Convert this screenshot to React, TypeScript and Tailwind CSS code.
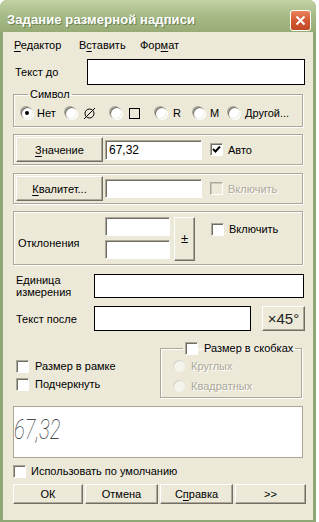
import { ReactNode } from "react";

const sunken =
  "bg-white border border-t-[#aca899] border-l-[#aca899] border-r-white border-b-white shadow-[inset_1px_1px_0_#716f64]";
const flat = "bg-white border border-black";
const etched =
  "border border-[#aca899] shadow-[inset_1px_1px_0_#fff,1px_1px_0_#fff]";

function U({ children }: { children: ReactNode }) {
  return <span className="underline underline-offset-[2px]">{children}</span>;
}

function Btn({ className = "", children }: { className?: string; children: ReactNode }) {
  return (
    <div
      className={`flex items-center justify-center bg-[#ece9d8] border border-t-white border-l-white border-r-[#716f64] border-b-[#716f64] shadow-[inset_-1px_-1px_0_#aca899] ${className}`}
    >
      {children}
    </div>
  );
}

function Check({ checked = false, disabled = false }: { checked?: boolean; disabled?: boolean }) {
  return (
    <span
      className={`flex items-center justify-center w-[13px] h-[13px] shrink-0 border border-t-[#aca899] border-l-[#aca899] border-r-white border-b-white ${
        disabled ? "bg-[#ece9d8] shadow-[inset_1px_1px_0_#c9c7ba]" : "bg-white shadow-[inset_1px_1px_0_#716f64]"
      }`}
    >
      {checked && (
        <svg width="9" height="9" viewBox="0 0 9 9">
          <path d="M1 4 L3.5 6.5 L8 1.5" stroke="#000" strokeWidth="2" fill="none" />
        </svg>
      )}
    </span>
  );
}

function Radio({ checked = false, disabled = false }: { checked?: boolean; disabled?: boolean }) {
  return (
    <span
      className={`flex items-center justify-center w-[12px] h-[12px] shrink-0 rounded-full ${
        disabled
          ? "bg-[#f4f3ec] shadow-[inset_1px_1px_0_#d6d4c8]"
          : "bg-white shadow-[inset_1px_1px_0_#716f64,inset_-1px_-1px_0_#f0efe8,-1px_-1px_0_#aca899,1px_1px_0_#fff]"
      }`}
    >
      {checked && <span className="w-[4px] h-[4px] rounded-full bg-black" />}
    </span>
  );
}

function Disabled({ children }: { children: ReactNode }) {
  return <span className="text-[#aca899] [text-shadow:1px_1px_0_#fff]">{children}</span>;
}

export default function App() {
  return (
    <div className="w-[319px] h-[522px] bg-white font-['Liberation_Sans',Arial,sans-serif] text-[11px] leading-[14px] text-black">
      <div className="w-[316px] flex flex-col bg-[#8fa774] rounded-t-[7px] px-[3px] pb-[3px]">
        {/* title bar */}
        <div className="h-[32px] -mx-[3px] rounded-t-[7px] flex items-center pt-[8px] pl-[7px] pr-[5px] bg-gradient-to-b from-[#c3d2a4] via-[#a6ba86] to-[#97ac75]">
          <span className="flex-1 font-bold text-[13px] text-white [text-shadow:1px_1px_0_#6d8152] tracking-[0.1px]">
            Задание размерной надписи
          </span>
          <div className="w-[21px] h-[21px] rounded-[3px] border border-white bg-gradient-to-b from-[#e8825c] via-[#d35a33] to-[#c04a24] flex items-center justify-center">
            <svg width="11" height="11" viewBox="0 0 11 11">
              <path d="M1.5 1.5 L9.5 9.5 M9.5 1.5 L1.5 9.5" stroke="#fff" strokeWidth="2" />
            </svg>
          </div>
        </div>

        <div className="bg-[#ece9d8] flex flex-col pl-[10px] pr-[6px] pb-[16px]">
          {/* menu */}
          <div className="h-[23px] -ml-[10px] flex items-center pt-[2px] pl-[11px]">
            <span className="w-[65px]">
              <U>Р</U>едактор
            </span>
            <span className="w-[61px]">
              В<U>с</U>тавить
            </span>
            <span>
              Фор<U>м</U>ат
            </span>
          </div>

          {/* Текст до */}
          <div className="mt-[4px] h-[26px] flex items-center">
            <span className="ml-[2px] w-[72px]">Текст до</span>
            <div className={`${flat} w-[218px] h-[26px]`} />
          </div>

          {/* Символ */}
          <fieldset className={`mt-[2px] w-[290px] ${etched} pl-[7px] pt-[5px] pb-[6px]`}>
            <legend className="ml-[7px] px-[2px] leading-[14px]">Символ</legend>
            <div className="flex items-center h-[14px]">
              <div className="flex items-center w-[44px] gap-[4px]">
                <Radio checked />
                <span>Нет</span>
              </div>
              <div className="flex items-center w-[45px] gap-[6px]">
                <Radio />
                <svg width="13" height="13" viewBox="0 0 13 13">
                  <circle cx="6.5" cy="6.5" r="4.5" stroke="#000" fill="none" />
                  <path d="M1 12 L12 1" stroke="#000" />
                </svg>
              </div>
              <div className="flex items-center w-[45px] gap-[7px]">
                <Radio />
                <span className="w-[11px] h-[11px] border border-black" />
              </div>
              <div className="flex items-center w-[38px] gap-[6px]">
                <Radio />
                <span>R</span>
              </div>
              <div className="flex items-center w-[35px] gap-[5px]">
                <Radio />
                <span>M</span>
              </div>
              <div className="flex items-center gap-[5px]">
                <Radio />
                <span>Другой...</span>
              </div>
            </div>
          </fieldset>

          {/* Значение */}
          <div className={`mt-[7px] w-[290px] h-[31px] ${etched} flex items-center pl-[2px]`}>
            <Btn className="w-[87px] h-[25px]">
              <span>
                <U>З</U>начение
              </span>
            </Btn>
            <div className={`${sunken} ml-[2px] w-[97px] h-[20px] flex items-center pl-[3px] text-[12px]`}>67,32</div>
            <div className="ml-[8px]">
              <Check checked />
            </div>
            <span className="ml-[5px]">Авто</span>
          </div>

          {/* Квалитет */}
          <div className={`mt-[8px] w-[290px] h-[31px] ${etched} flex items-center pl-[2px]`}>
            <Btn className="w-[87px] h-[25px]">
              <span>
                <U>К</U>валитет...
              </span>
            </Btn>
            <div className={`${sunken} ml-[2px] w-[97px] h-[19px]`} />
            <div className="ml-[8px]">
              <Check disabled />
            </div>
            <span className="ml-[5px]">
              <Disabled>Включить</Disabled>
            </span>
          </div>

          {/* Отклонения */}
          <div className={`mt-[7px] w-[290px] h-[54px] ${etched} flex items-start`}>
            <span className="w-[91px] pl-[4px] mt-[24px]">Отклонения</span>
            <div className="flex flex-col gap-[4px] mt-[5px]">
              <div className={`${sunken} w-[65px] h-[19px]`} />
              <div className={`${sunken} w-[65px] h-[19px]`} />
            </div>
            <Btn className="ml-[4px] mt-[5px] w-[21px] h-[44px]">
              <span className="text-[13px]">±</span>
            </Btn>
            <div className="ml-[16px] mt-[10px] flex items-center gap-[5px]">
              <Check />
              <span>Включить</span>
            </div>
          </div>

          {/* Единица измерения */}
          <div className="mt-[9px] h-[24px] flex items-center">
            <span className="ml-[3px] w-[78px] leading-[12px]">
              Единица
              <br />
              измерения
            </span>
            <div className={`${flat} w-[210px] h-[24px]`} />
          </div>

          {/* Текст после */}
          <div className="mt-[8px] h-[25px] flex items-center">
            <span className="ml-[3px] w-[78px]">Текст после</span>
            <div className={`${flat} w-[157px] h-[25px]`} />
            <Btn className="ml-[11px] w-[43px] h-[25px]">
              <span className="text-[15px] text-[#222]">×45°</span>
            </Btn>
          </div>

          {/* флажки */}
          <div className="mt-[10px] flex items-start">
            <div className="w-[147px] pt-[18px] pl-[3px] flex flex-col gap-[4px]">
              <div className="flex items-center gap-[6px] h-[14px]">
                <Check />
                <span>Размер в рамке</span>
              </div>
              <div className="flex items-center gap-[6px] h-[14px]">
                <Check />
                <span>Подчеркнуть</span>
              </div>
            </div>
            <fieldset className={`w-[142px] ${etched} pl-[12px] pt-[4px] pb-[4px]`}>
              <legend className="ml-[10px] px-[2px] flex items-center gap-[6px] h-[14px] whitespace-nowrap">
                <Check />
                <span>Размер в скобках</span>
              </legend>
              <div className="flex flex-col gap-[6px]">
                <div className="flex items-center gap-[6px] h-[14px]">
                  <Radio disabled />
                  <Disabled>Круглых</Disabled>
                </div>
                <div className="flex items-center gap-[6px] h-[14px]">
                  <Radio disabled />
                  <Disabled>Квадратных</Disabled>
                </div>
              </div>
            </fieldset>
          </div>

          {/* предпросмотр */}
          <div className="mt-[8px] w-[290px] h-[52px] bg-white border border-[#aca899] flex items-start pt-[7px] overflow-hidden">
            <span className="font-['Roboto',sans-serif] font-thin italic text-[28px] leading-[32px] text-[#222] origin-left scale-x-[0.72] inline-block">
              67,32
            </span>
          </div>

          {/* по умолчанию */}
          <div className="mt-[6px] h-[14px] flex items-center gap-[5px]">
            <Check />
            <span>Использовать по умолчанию</span>
          </div>

          {/* кнопки */}
          <div className="mt-[6px] flex gap-[2px]">
            <Btn className="w-[70px] h-[20px]">ОК</Btn>
            <Btn className="w-[73px] h-[20px]">Отмена</Btn>
            <Btn className="w-[73px] h-[20px]">
              <span>
                С<U>п</U>равка
              </span>
            </Btn>
            <Btn className="w-[71px] h-[20px]">&gt;&gt;</Btn>
          </div>
        </div>
      </div>
    </div>
  );
}
